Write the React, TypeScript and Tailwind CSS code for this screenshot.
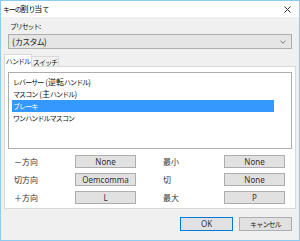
const font = { fontFamily: '"Noto Sans CJK JP", "Noto Sans", sans-serif' };

const items = ["レバーサー (逆転ハンドル)", "マスコン (主ハンドル)", "ブレーキ", "ワンハンドルマスコン"];

// kana glyphs in the original UI font are much narrower than kanji
function J({ t, narrow = "text-[7px] tracking-[-0.9px]" }: { t: string; narrow?: string }) {
  return (
    <span className="whitespace-nowrap">
      {Array.from(t).map((c, i) =>
        /[\u3040-\u30ff]/.test(c) ? (
          <span key={i} className={narrow}>
            {c}
          </span>
        ) : (
          <span key={i}>{c}</span>
        )
      )}
    </span>
  );
}

function KeyButton({ label }: { label: string }) {
  return (
    <div className="w-[61px] h-[13px] border border-[#adadad] bg-[#e1e1e1] flex items-center justify-center text-[8px] leading-none text-[#333] font-['Noto_Sans',sans-serif]">
      {label}
    </div>
  );
}

function Row({ left, leftKey, right, rightKey }: { left: string; leftKey: string; right: string; rightKey: string }) {
  return (
    <div className="flex items-center h-[13px]">
      <div className="w-[67px] pl-[6px] text-[8px] leading-none text-[#333]">{left}</div>
      <KeyButton label={leftKey} />
      <div className="w-[88px] pl-[27px] text-[8px] leading-none text-[#333]">{right}</div>
      <KeyButton label={rightKey} />
    </div>
  );
}

export default function App() {
  return (
    <div
      className="w-[300px] h-[241px] border border-[#8ecbef] bg-[#f0f0f0] flex flex-col overflow-hidden"
      style={font}
    >
      <div className="h-[16px] bg-white flex items-center justify-between pl-[2px] pr-[8px]">
        <span className="text-[8px] leading-none text-black">
          <J t="キーの割り当て" narrow="text-[7px] tracking-[-1.2px]" />
        </span>
        <svg width="7" height="7" viewBox="0 0 7 7">
          <path d="M0.5 0.5L6.5 6.5M6.5 0.5L0.5 6.5" stroke="#333" strokeWidth="1" />
        </svg>
      </div>

      <div className="flex-1 flex flex-col">
        <div className="pl-[9px] pt-[3px] h-[17px] text-[8px] leading-[12px] text-[#222]">
          <J t="プリセット:" narrow="text-[7px] tracking-[-1.2px]" />
        </div>
        <div className="mx-[7px] h-[15px] border border-[#adadad] bg-[#e5e5e5] flex items-center justify-between pl-[3px] pr-[5px]">
          <span className="text-[9px] leading-none text-[#222]">
            <J t="(カスタム)" narrow="text-[8px] tracking-[-0.8px]" />
          </span>
          <svg width="6" height="4" viewBox="0 0 6 4">
            <path d="M0.5 0.8L3 3.2L5.5 0.8" stroke="#666" strokeWidth="0.9" fill="none" />
          </svg>
        </div>

        <div className="mt-[5px] flex items-end pl-[3px] h-[13px]">
          <div className="relative z-10 h-[13px] w-[28px] bg-white border border-b-0 border-[#d9d9d9] flex items-center justify-center text-[8px] leading-none text-[#222]">
            <J t="ハンドル" />
          </div>
          <div className="h-[11px] w-[27px] bg-[#f0f0f0] border border-l-0 border-b-0 border-[#d9d9d9] flex items-center justify-center text-[8px] leading-none text-[#222]">
            <J t="スイッチ" />
          </div>
        </div>

        <div className="-mt-[1px] mx-[3px] h-[143px] bg-white border border-[#d9d9d9] flex flex-col px-[3px] pt-[5px]">
          <div className="h-[77px] border border-[#adadad] bg-white pt-[3px] pl-[3px] pr-[17px]">
            {items.map((t, i) => (
              <div
                key={t}
                className={
                  "h-[12px] flex items-center text-[8px] leading-none pl-[1px] " +
                  (i === 2 ? "bg-[#3399ff] text-white" : "text-[#111]")
                }
              >
                <J t={t} />
              </div>
            ))}
          </div>

          <div className="mt-[6px] flex flex-col gap-[5px]">
            <Row left="－方向" leftKey="None" right="最小" rightKey="None" />
            <Row left="切方向" leftKey="Oemcomma" right="切" rightKey="None" />
            <Row left="＋方向" leftKey="L" right="最大" rightKey="P" />
          </div>
        </div>

        <div className="mt-[8px] flex justify-end gap-[6px] pr-[7px]">
          <div className="w-[53px] h-[14px] border border-[#0078d7] bg-[#e1e1e1] flex items-center justify-center text-[8px] leading-none text-[#333] font-['Noto_Sans',sans-serif]">
            OK
          </div>
          <div className="w-[53px] h-[14px] border border-[#adadad] bg-[#e1e1e1] flex items-center justify-center text-[8px] leading-none text-[#222]">
            <J t="キャンセル" narrow="text-[7px] tracking-[-0.8px]" />
          </div>
        </div>
      </div>
    </div>
  );
}
